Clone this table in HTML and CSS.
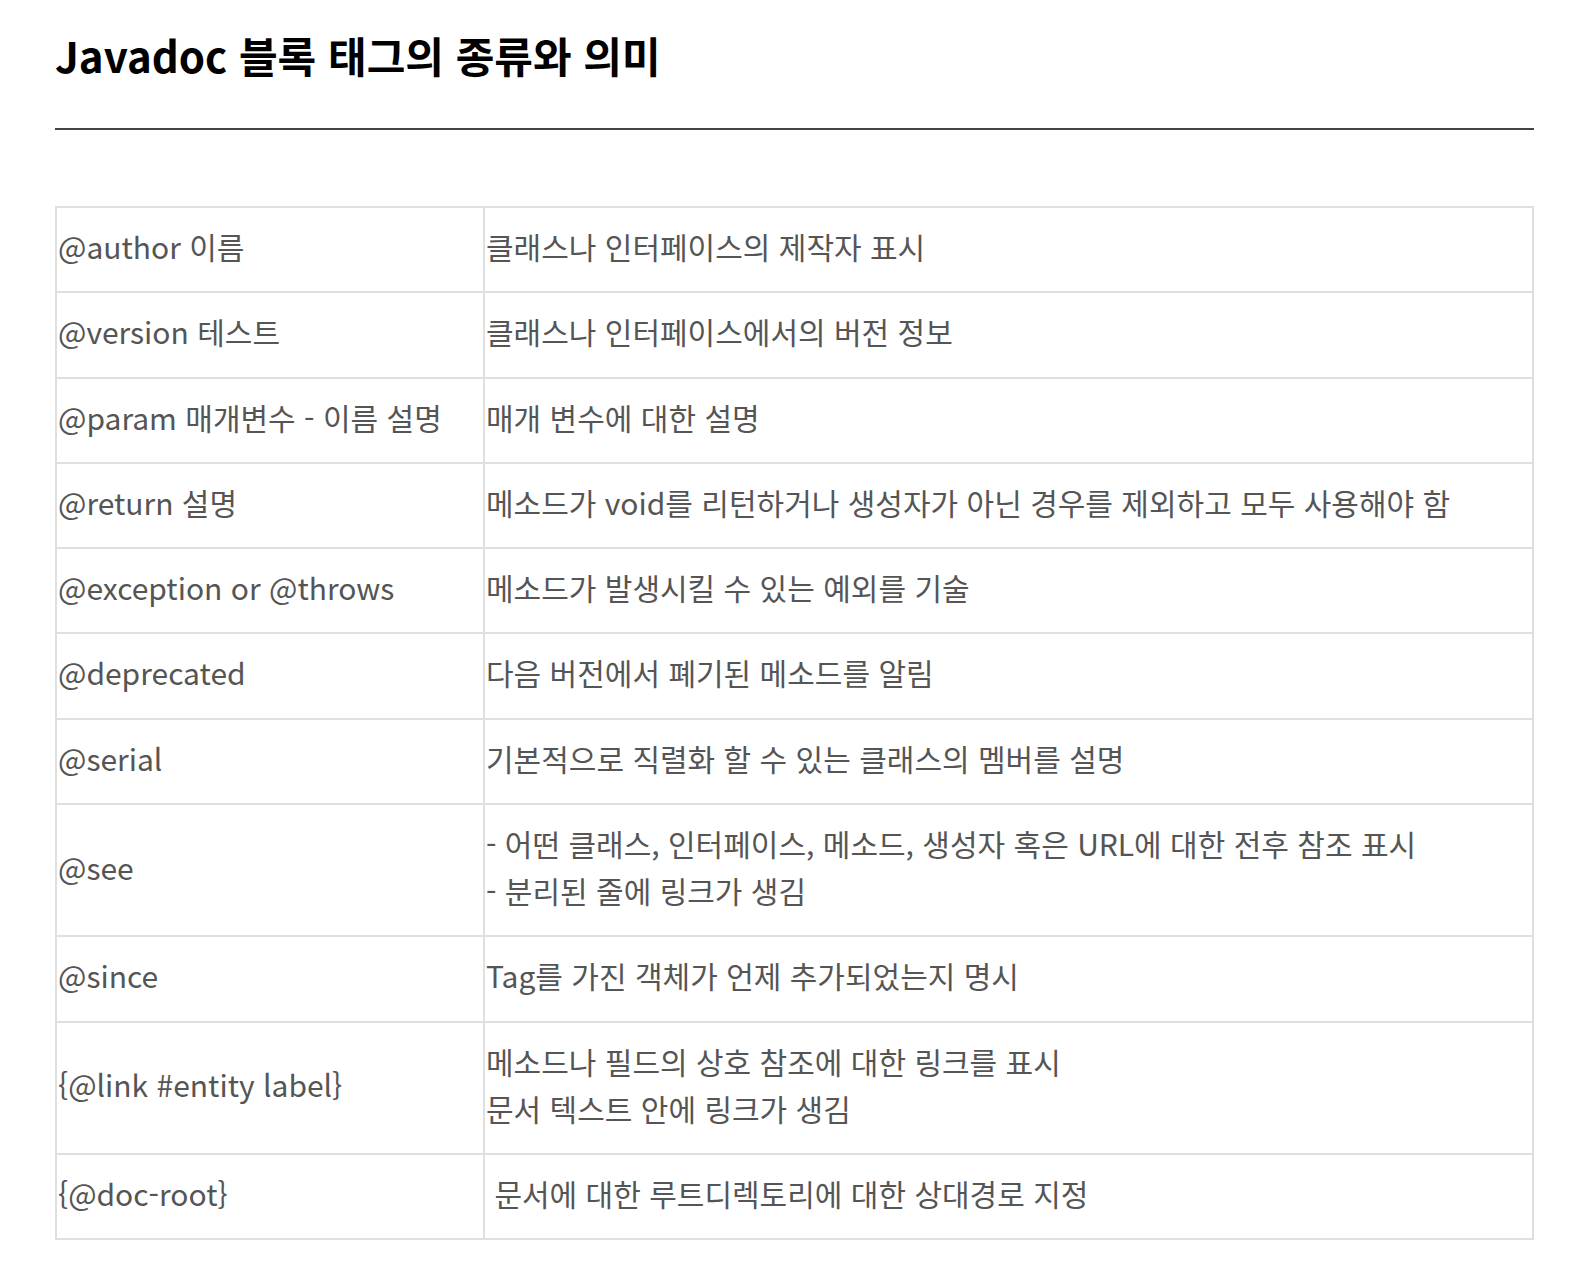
FILE: index.html
```html
<!DOCTYPE html>
<html lang="ko">
<head>
<meta charset="utf-8">
<link rel="stylesheet" href="styles.css">
</head>
<body>
<div class="page">
  <h2 class="title">Javadoc 블록 태그의 종류와 의미</h2>
  <hr class="rule">
  <table class="tags">
    <colgroup><col class="c1"><col class="c2"></colgroup>
    <tbody>
      <tr><td>@author 이름</td><td>클래스나 인터페이스의 제작자 표시</td></tr>
      <tr><td>@version 테스트</td><td>클래스나 인터페이스에서의 버전 정보</td></tr>
      <tr><td>@param 매개변수 - 이름 설명</td><td>매개 변수에 대한 설명</td></tr>
      <tr><td>@return 설명</td><td>메소드가 void를 리턴하거나 생성자가 아닌 경우를 제외하고 모두 사용해야 함</td></tr>
      <tr><td>@exception or @throws</td><td>메소드가 발생시킬 수 있는 예외를 기술</td></tr>
      <tr><td>@deprecated</td><td>다음 버전에서 폐기된 메소드를 알림</td></tr>
      <tr><td>@serial</td><td>기본적으로 직렬화 할 수 있는 클래스의 멤버를 설명</td></tr>
      <tr><td>@see</td><td>- 어떤 클래스, 인터페이스, 메소드, 생성자 혹은 URL에 대한 전후 참조 표시<br>- 분리된 줄에 링크가 생김</td></tr>
      <tr><td>@since</td><td>Tag를 가진 객체가 언제 추가되었는지 명시</td></tr>
      <tr><td>{@link #entity label}</td><td>메소드나 필드의 상호 참조에 대한 링크를 표시<br>문서 텍스트 안에 링크가 생김</td></tr>
      <tr><td>{@doc-root}</td><td>&nbsp;문서에 대한 루트디렉토리에 대한 상대경로 지정</td></tr>
    </tbody>
  </table>
</div>
</body>
</html>
```
FILE: styles.css
```css
html, body {
  margin: 0;
  padding: 0;
  background: #fff;
}
body {
  font-family: "Noto Sans CJK KR", "Noto Sans", sans-serif;
  color: #555;
}
.page {
  width: 1479px;
  padding: 20px 0 0 55px;
}
.title {
  margin: 0;
  font-size: 42px;
  font-weight: 700;
  color: #000;
  line-height: 70px;
}
.rule {
  margin: 38px 0 0 0;
  border: 0;
  height: 2px;
  background: #444;
}
.tags {
  margin-top: 76px;
  width: 100%;
  border-collapse: collapse;
  font-size: 30px;
  line-height: 47px;
}
.c1 { width: 428px; }
.tags td {
  border: 2px solid #e0e0e0;
  padding: 15px 0 21.3px 1px;
  vertical-align: middle;
  text-align: left;
}
```
